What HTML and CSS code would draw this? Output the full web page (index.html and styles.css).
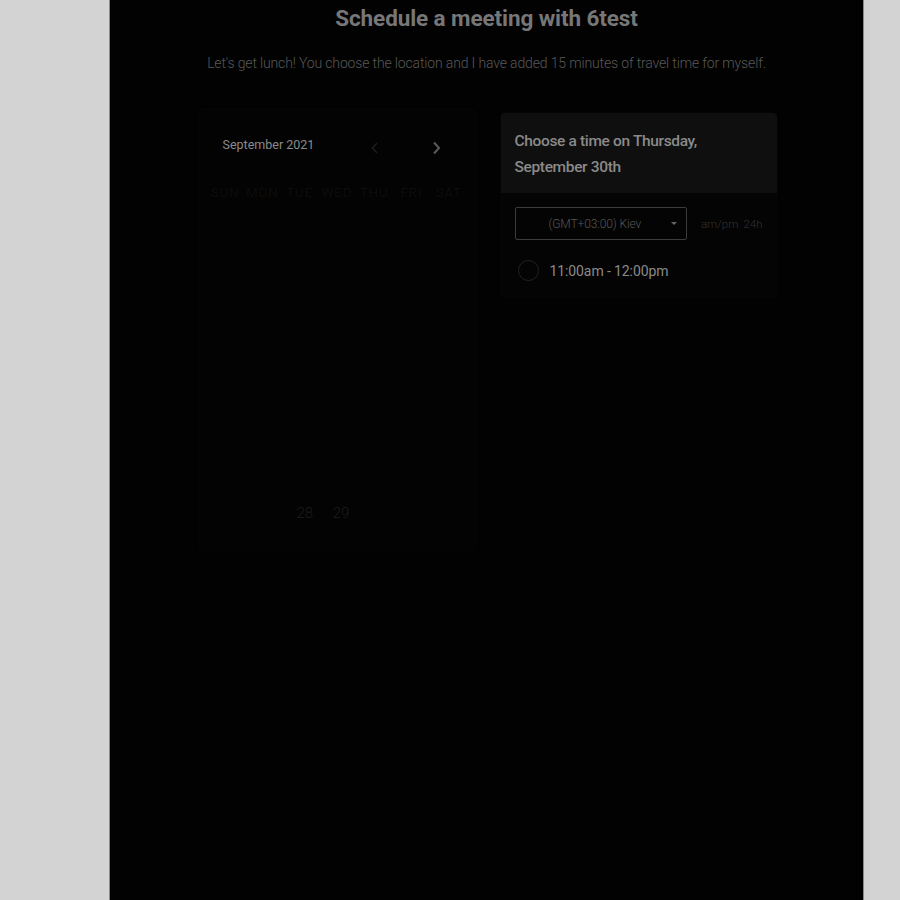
FILE: index.html
```html
<!DOCTYPE html>
<html>
<head>
<meta charset="utf-8">
<link rel="stylesheet" href="styles.css">
</head>
<body>
<div class="page">
  <main class="column">
    <h1 class="title">Schedule a meeting with 6test</h1>
    <p class="subtitle">Let's get lunch! You choose the location and I have added 15 minutes of travel time for myself.</p>
    <div class="panels">
      <section class="calendar">
        <div class="cal-head">
          <span class="month">September 2021</span>
          <span class="nav prev"><svg width="8" height="12" viewBox="0 0 8 12"><path d="M6 1 L1.5 6 L6 11" fill="none" stroke="currentColor" stroke-width="1.5"/></svg></span>
          <span class="nav next"><svg width="9" height="14" viewBox="0 0 9 14"><path d="M2 1.5 L7 7 L2 12.5" fill="none" stroke="currentColor" stroke-width="2"/></svg></span>
        </div>
        <div class="weekdays">
          <span>SUN</span><span>MON</span><span>TUE</span><span>WED</span><span>THU</span><span>FRI</span><span>SAT</span>
        </div>
        <div class="days">
          <span></span><span></span><span></span><span>1</span><span>2</span><span>3</span><span>4</span>
          <span>5</span><span>6</span><span>7</span><span>8</span><span>9</span><span>10</span><span>11</span>
          <span>12</span><span>13</span><span>14</span><span>15</span><span>16</span><span>17</span><span>18</span>
          <span>19</span><span>20</span><span>21</span><span>22</span><span>23</span><span>24</span><span>25</span>
          <span>26</span><span>27</span><span class="avail">28</span><span class="avail">29</span><span>30</span><span></span><span></span>
        </div>
      </section>
      <section class="times">
        <div class="times-head">Choose a time on Thursday, September 30th</div>
        <div class="times-body">
          <div class="tz-row">
            <div class="tz-select"><span>(GMT+03:00) Kiev</span><span class="caret"></span></div>
            <div class="fmt"><span>am/pm</span><span>24h</span></div>
          </div>
          <div class="slot"><span class="radio"></span><span>11:00am - 12:00pm</span></div>
        </div>
      </section>
    </div>
  </main>
</div>
</body>
</html>
```
FILE: styles.css
```css
html, body {
  margin: 0;
  padding: 0;
  background: #d3d3d3;
  height: 100%;
}
body {
  font-family: Roboto, "Liberation Sans", sans-serif;
}
.page {
  display: flex;
  height: 900px;
  padding-left: 109px;
  overflow: hidden;
}
.column {
  width: 753px;
  background: #020202;
  border-left: 1px solid #8a8a8a;
  border-right: 1px solid #8a8a8a;
  display: flex;
  flex-direction: column;
  align-items: center;
}
.title {
  margin: 5px 0 0;
  font-size: 22.5px;
  font-weight: 700;
  letter-spacing: -0.1px;
  line-height: 26px;
  color: #777;
}
.subtitle {
  margin: 22px 0 0;
  font-size: 14px;
  font-weight: 300;
  letter-spacing: -0.15px;
  color: #585858;
  line-height: 20px;
}
.panels {
  display: flex;
  gap: 25px;
  margin-top: 36px;
  align-items: flex-start;
  margin-left: 2px;
}
.calendar {
  width: 277px;
  height: 442px;
  background: #030303;
  border-radius: 4px;
  box-shadow: 0 0 3px rgba(12,12,12,0.8);
  box-sizing: border-box;
  padding: 26px 8px 0 8px;
}
.cal-head {
  display: flex;
  align-items: center;
  height: 18px;
  padding-left: 16px;
}
.month {
  font-size: 12.5px;
  color: #8a8a8a;
  flex: 1;
}
.nav { display: flex; align-items: center; }
.prev { color: #1e1e1e; margin-right: 53px; margin-top: 8px; }
.next { color: #5a5a5a; margin-right: 27px; margin-top: 8px; }
.weekdays {
  display: grid;
  grid-template-columns: repeat(7, 1fr);
  margin-top: 32px;
  font-size: 13px;
  font-weight: 300;
  letter-spacing: 1px;
  color: #101010;
  text-align: center;
}
.days {
  display: grid;
  grid-template-columns: repeat(7, 1fr);
  grid-auto-rows: 67px;
  margin-top: 34px;
  padding-left: 8px;
  font-size: 14px;
  font-weight: 300;
  color: #050505;
  text-align: center;
}
.days span { line-height: 22px; }
.days .avail { color: #1c1c1c; font-size: 15px; }
.times {
  width: 276px;
  margin-top: 4px;
  background: #040404;
  border-radius: 4px;
  box-shadow: 0 0 3px rgba(12,12,12,0.8);
  overflow: hidden;
}
.times-head {
  background: #0f0f0f;
  padding: 15px 70px 13px 14px;
  font-size: 15.5px;
  font-weight: 500;
  line-height: 26px;
  color: #8a8a8a;
  letter-spacing: -0.35px;
  height: 52px;
}
.times-body {
  padding: 14px 14px 17px;
}
.tz-row {
  display: flex;
  align-items: center;
  gap: 14px;
}
.tz-select {
  width: 175px;
  height: 33px;
  box-sizing: border-box;
  border: 1px solid #3c3c3c;
  border-radius: 2px;
  display: flex;
  align-items: center;
  font-size: 12px;
  font-weight: 300;
  color: #555;
  padding-left: 33px;
  letter-spacing: -0.1px;
  position: relative;
}
.caret {
  position: absolute;
  right: 9px;
  top: 14px;
  width: 0;
  height: 0;
  border-left: 3px solid transparent;
  border-right: 3px solid transparent;
  border-top: 3px solid #666;
}
.fmt {
  display: flex;
  gap: 5px;
  font-size: 11.5px;
  font-weight: 300;
  color: #333;
}
.slot {
  display: flex;
  align-items: center;
  gap: 11px;
  margin-top: 20px;
  padding-left: 3px;
  font-size: 14px;
  color: #8a8a8a;
  letter-spacing: -0.1px;
}
.radio {
  width: 19px;
  height: 19px;
  border: 1px solid #222;
  border-radius: 50%;
}
```
